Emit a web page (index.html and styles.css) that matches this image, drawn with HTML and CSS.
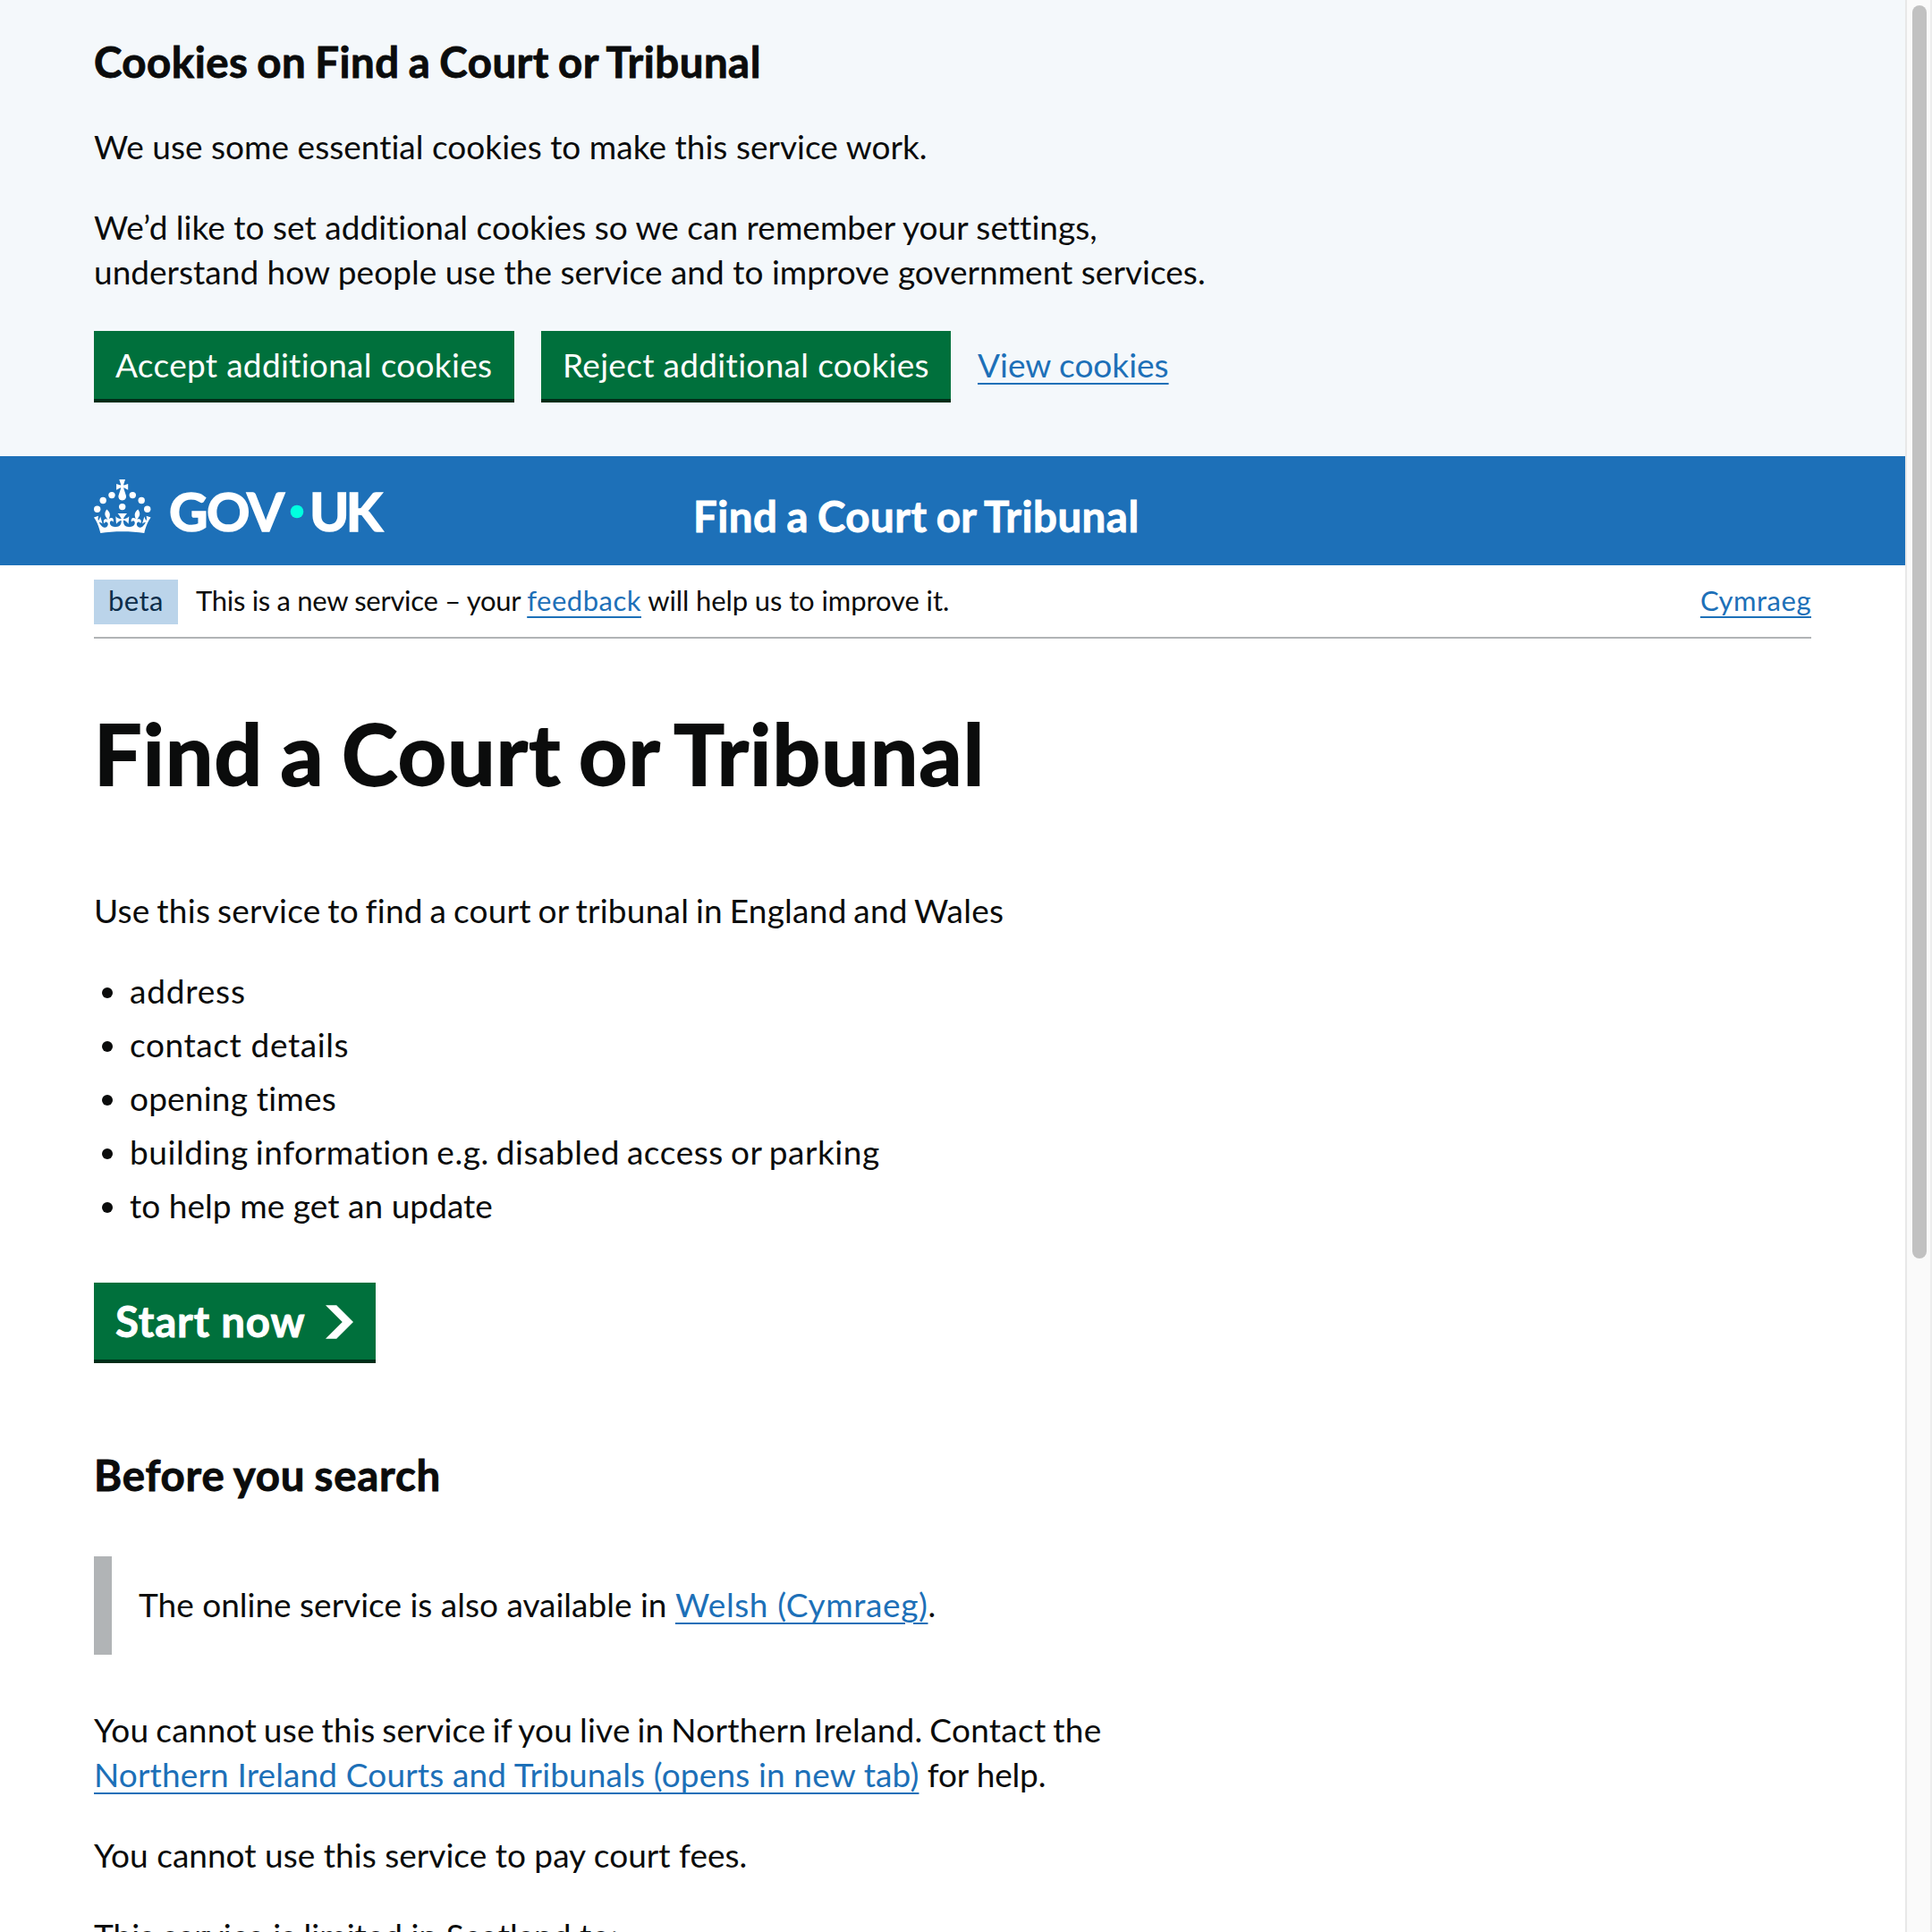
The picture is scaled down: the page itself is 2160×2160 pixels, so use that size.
FILE: index.html
```html
<!DOCTYPE html>
<html lang="en">
<head>
<meta charset="utf-8">
<title>Find a Court or Tribunal</title>
<link rel="stylesheet" href="styles.css">
</head>
<body>
<div class="page">
  <section class="cookie-banner">
    <h2 class="heading-m cookie-heading">Cookies on Find a Court or Tribunal</h2>
    <p class="body">We use some essential cookies to make this service work.</p>
    <p class="body">We’d like to set additional cookies so we can remember your settings,<br>understand how people use the service and to improve government services.</p>
    <div class="button-group">
      <button class="button accept">Accept additional cookies</button>
      <button class="button reject">Reject additional cookies</button>
      <a class="link" href="#">View cookies</a>
    </div>
  </section>
  <header class="header">
    <svg class="logo" viewBox="0 0 324 60" width="324" height="60" role="img" aria-label="GOV.UK">
      <g fill="#fff">
        <circle cx="20" cy="17.6" r="3.7"/><circle cx="10.2" cy="23.5" r="3.7"/><circle cx="3.7" cy="33.2" r="3.7"/>
        <circle cx="31.7" cy="30.6" r="3.7"/>
        <circle cx="43.3" cy="17.6" r="3.7"/><circle cx="53.2" cy="23.5" r="3.7"/><circle cx="59.7" cy="33.2" r="3.7"/>
        <path d="M33.1,9.8c.2-.1.3-.3.5-.5l4.6,2.4v-6.8l-4.6,1.5c-.1-.2-.3-.3-.5-.5l1.9-5.9h-6.7l1.9,5.9c-.2.1-.3.3-.5.5l-4.6-1.5v6.8l4.6-2.4c.1.2.3.3.5.5l-2.6,8c-.9,2.8,1.2,5.7,4.1,5.7h0c3,0,5.1-2.9,4.1-5.7l-2.6-8ZM37,37.9s-3.4,3.8-4.1,6.1c2.2,0,4.2-.5,6.4-2.8l-.7,8.5c-2-2.8-4.4-4.1-5.7-3.8.1,3.1.5,6.7,5.8,7.2,3.7.3,6.7-1.5,7-3.8.4-2.6-2-4.3-3.7-1.6-1.4-4.5,2.4-6.1,4.9-3.2-1.9-4.5-1.8-7.7,2.4-10.9,3,4,2.6,7.3-1.2,11.1,2.4-1.3,6.2,0,4,4.6-1.2-2.8-3.7-2.2-4.2.2-.3,1.7.7,3.7,3,4.2,1.9.3,4.7-.9,7-5.9-1.3,0-2.4.7-3.9,1.7l2.4-8c.6,2.3,1.4,3.7,2.2,4.5.6-1.6.5-2.8,0-5.3l5,1.8c-2.6,3.6-5.2,8.7-7.3,17.5-7.4-1.1-15.7-1.7-24.5-1.7h0c-8.8,0-17.1.6-24.5,1.7-2.1-8.9-4.7-13.9-7.3-17.5l5-1.8c-.5,2.5-.6,3.7,0,5.3.8-.8,1.6-2.3,2.2-4.5l2.4,8c-1.5-1-2.6-1.7-3.9-1.7,2.3,5,5.2,6.2,7,5.9,2.3-.4,3.3-2.4,3-4.2-.5-2.4-3-3.1-4.2-.2-2.2-4.6,1.6-6,4-4.6-3.7-3.7-4.2-7.1-1.2-11.1,4.2,3.2,4.3,6.4,2.4,10.9,2.5-2.8,6.3-1.3,4.9,3.2-1.8-2.7-4.1-1-3.7,1.6.3,2.3,3.3,4.1,7,3.8,5.4-.5,5.7-4.2,5.8-7.2-1.3-.2-3.7,1-5.7,3.8l-.7-8.5c2.2,2.3,4.2,2.7,6.4,2.8-.7-2.3-4.1-6.1-4.1-6.1h10.6,0Z"/>
        <text class="logo-text" x="84" y="58" textLength="129">GOV</text>
        <text class="logo-text" x="241" y="58" textLength="82">UK</text>
      </g>
      <circle cx="227" cy="36" r="7.3" fill="#00ffe0"/>
    </svg>
    <span class="service-name">Find a Court or Tribunal</span>
  </header>
  <div class="container">
    <div class="phase-banner">
      <strong class="tag">beta</strong>
      <span class="phase-text"><span class="t-new">This is a new service – your </span><a class="link t-feedback" href="#">feedback</a><span class="t-will"> will help us to improve it.</span></span>
      <a class="link t-feedback" href="#">Cymraeg</a>
    </div>
    <main class="main">
      <h1 class="heading-xl">Find a Court or Tribunal</h1>
      <p class="body t-use">Use this service to find a court or tribunal in England and Wales</p>
      <ul class="list">
        <li class="t-address">address</li>
        <li class="t-contact">contact details</li>
        <li class="t-opening">opening times</li>
        <li class="t-building">building information e.g. disabled access or parking</li>
        <li class="t-update">to help me get an update</li>
      </ul>
      <button class="button start">Start now
        <svg class="arrow" viewBox="0 0 33 40" width="31" height="38"><path fill="#fff" d="M0 0h13l20 20-20 20H0l20-20z"/></svg>
      </button>
      <h2 class="heading-m before">Before you search</h2>
      <div class="inset">The online service is also available in <a class="link t-welsh" href="#">Welsh (Cymraeg)</a>.</div>
      <p class="body"><span class="t-cannot">You cannot use this service if you live in Northern Ireland. Contact the</span><br><a class="link t-ni" href="#">Northern Ireland Courts and Tribunals (opens in new tab)</a><span class="t-help"> for help.</span></p>
      <p class="body">You cannot use this service to pay court fees.</p>
      <p class="body">This service is limited in Scotland to:</p>
    </main>
  </div>
</div>
<div class="scrollbar"><div class="thumb"></div></div>
</body>
</html>
```
FILE: styles.css
```css
* { box-sizing: border-box; }

body {
  display: flex;
  width: 2160px;
  height: 2160px;
  margin: 0;
  overflow: hidden;
  background: #fff;
  color: #0b0c0c;
  font-family: Lato, "Noto Sans", sans-serif;
  font-size: 37px;
  line-height: 50px;
  font-variant-ligatures: none;
  white-space: nowrap;
}

.page { width: 2130px; height: 2160px; overflow: hidden; }

.link {
  color: #1d70b8;
  text-decoration: underline;
  text-decoration-thickness: 2px;
  text-underline-offset: 6px;
}

.body { margin: 0 0 40px; letter-spacing: 0.02px; }

.heading-m {
  margin: 0;
  font-size: 47.4px;
  line-height: 60px;
  font-weight: 700;
  letter-spacing: 0.5px;
  word-spacing: -2px;
  -webkit-text-stroke: 0.9px currentColor;
}

/* Cookie banner */
.cookie-banner {
  height: 510px;
  padding: 39px 105px 0;
  background: #f4f8fb;
}
.cookie-heading { margin-bottom: 40px; }
.button-group { display: flex; gap: 30px; margin-top: 41px; }
.button-group .link { line-height: 76px; }

.button {
  display: flex;
  align-items: center;
  height: 76px;
  padding: 0 24px;
  border: 0;
  border-radius: 0;
  background: #00703c;
  box-shadow: 0 4px 0 #002d18;
  color: #fff;
  font: inherit;
}
.accept { width: 470px; letter-spacing: 0.31px; }
.reject { width: 458px; letter-spacing: 0.32px; }

/* Header */
.header {
  display: grid;
  grid-template-columns: 670px auto;
  height: 122px;
  padding: 26px 105px 0;
  background: #1d70b8;
}
.logo { overflow: visible; }
.logo-text {
  font-size: 60px;
  font-weight: 700;
  stroke: #fff;
  stroke-width: 1.6px;
}
.service-name {
  padding-top: 11px;
  color: #fff;
  font-size: 47.4px;
  font-weight: 700;
  line-height: 60px;
  letter-spacing: 0.5px;
  word-spacing: -2px;
  -webkit-text-stroke: 0.9px currentColor;
}

.container { margin: 0 105px; }

/* Phase banner */
.phase-banner {
  display: flex;
  align-items: flex-start;
  height: 82px;
  padding-top: 16px;
  border-bottom: 2px solid #b1b4b6;
  font-size: 31px;
  line-height: 47px;
}
.tag {
  width: 94px;
  height: 50px;
  padding-left: 16px;
  background: #bbd4ea;
  color: #0c2d4a;
  font-weight: 400;
  letter-spacing: 0.45px;
}
.phase-text { flex: 1; margin-left: 20px; white-space: pre; }
.t-new { letter-spacing: -0.3px; }
.t-feedback { letter-spacing: 0.5px; }
.t-will { letter-spacing: -0.1px; }

/* Main content */
.main { padding-top: 78px; }
.heading-xl {
  margin: 0 0 101px;
  font-size: 94.5px;
  line-height: 100px;
  font-weight: 700;
  letter-spacing: 1.25px;
  word-spacing: -5px;
  -webkit-text-stroke: 1.8px currentColor;
}
.t-use { letter-spacing: 0.25px; word-spacing: -2px; }

.list { margin: 0; padding: 0; list-style: none; }
.list li { display: flex; align-items: center; margin-bottom: 10px; }
.list li::before {
  content: "";
  width: 12px;
  height: 12px;
  margin: 3px 19px 0 9px;
  border-radius: 50%;
  background: #0b0c0c;
}
.t-address { letter-spacing: 0.8px; }
.t-contact { letter-spacing: 0.6px; }
.t-opening { letter-spacing: 0.2px; }
.t-building { letter-spacing: 0.55px; word-spacing: -2px; }
.t-update { letter-spacing: 0.05px; }

.start {
  gap: 23px;
  width: 315px;
  height: 86px;
  margin-top: 61px;
  font-size: 47.4px;
  font-weight: 700;
  letter-spacing: 0.8px;
  -webkit-text-stroke: 0.9px currentColor;
}
.arrow { margin-top: 2px; }
.before { margin-top: 99px; letter-spacing: 0.8px; }

.inset {
  height: 110px;
  margin: 61px 0 59px;
  padding: 29px 0 0 30px;
  border-left: 20px solid #b1b4b6;
}
.t-welsh { letter-spacing: 0.6px; }
.t-cannot { letter-spacing: 0.27px; word-spacing: -2px; }
.t-ni { letter-spacing: 0.14px; }
.t-help { letter-spacing: -0.15px; }

/* Scrollbar */
.scrollbar {
  width: 30px;
  height: 2160px;
  padding: 6px 4px 0 6px;
  border-left: 2px solid #e8e8e8;
  border-right: 2px solid #ededed;
  background: #fafafa;
}
.thumb { width: 16px; height: 1401px; border-radius: 8px; background: #c1c1c1; }
```
